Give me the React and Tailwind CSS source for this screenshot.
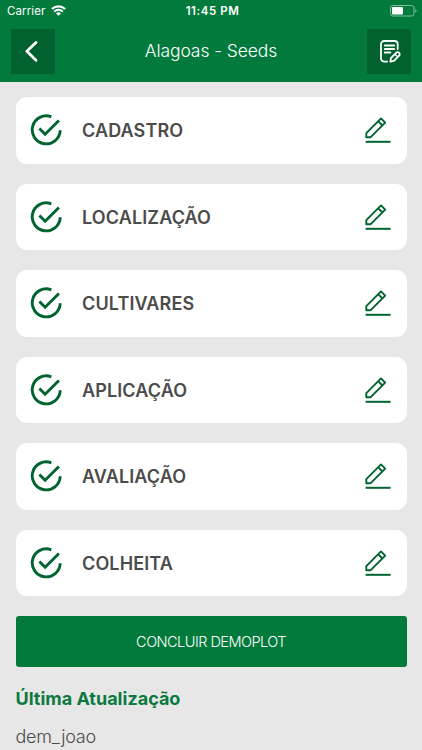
const steps = [
  "CADASTRO",
  "LOCALIZAÇÃO",
  "CULTIVARES",
  "APLICAÇÃO",
  "AVALIAÇÃO",
  "COLHEITA",
];

function StatusBar() {
  return (
    <div className="flex h-[22px] items-center pl-[7px] pr-[4px] text-white">
      <div className="flex flex-1 items-center gap-[6px]">
        <span className="pt-px text-[11.5px] leading-none tracking-[0.1px]">Carrier</span>
        <svg className="mb-px" width="15" height="11" viewBox="0 0 15 11" fill="none" stroke="currentColor">
          <path d="M0.9 4.1a9.4 9.4 0 0 1 13.2 0" strokeWidth="2.1" />
          <path d="M3.2 6.6a6 6 0 0 1 8.6 0" strokeWidth="2" />
          <path d="M5.1 8.4a3.4 3.4 0 0 1 4.8 0L7.5 10.8z" fill="currentColor" stroke="none" />
        </svg>
      </div>
      <span className="pt-px text-[11.5px] font-semibold leading-none tracking-[0.55px]">11:45 PM</span>
      <div className="flex flex-1 justify-end">
        <svg width="28" height="12" viewBox="0 0 28 12" fill="none">
          <rect x="0.5" y="0.5" width="23.5" height="10.5" rx="2.5" stroke="#7fbd9a" />
          <rect x="2" y="2" width="11" height="7.5" rx="1" fill="#fff" />
          <path d="M25.3 4v3.8c1.6-.6 1.6-3.2 0-3.8z" fill="#7fbd9a" />
        </svg>
      </div>
    </div>
  );
}

function Header() {
  return (
    <header className="h-[81.5px] bg-[#027a3c]">
      <StatusBar />
      <div className="flex items-center justify-between px-[10.5px] pt-[7px] text-white">
        <button className="flex h-[44.5px] w-[44.5px] items-center justify-center bg-[#02622f]">
          <svg width="44" height="44" viewBox="0 0 44 44" fill="none" stroke="currentColor" strokeWidth="2.8" strokeLinecap="round" strokeLinejoin="round">
            <path d="M25 13.5 15.8 22.3 25 31.2" />
          </svg>
        </button>
        <h1 className="text-[17.5px] font-light tracking-[-0.1px]">Alagoas - Seeds</h1>
        <button className="flex h-[44.5px] w-[44.5px] items-center justify-center bg-[#02622f]">
          <svg width="44" height="44" viewBox="0 0 44 44" fill="none" stroke="currentColor" strokeWidth="1.8" strokeLinecap="round" strokeLinejoin="round">
            <path d="M30.7 20V15.2a3.2 3.2 0 0 0-3.2-3.2H17.2a3.2 3.2 0 0 0-3.2 3.2v14.2a3.2 3.2 0 0 0 3.2 3.2h2.9" />
            <path d="M17.8 16.5h9.4M17.8 20h9.4M17.8 23.5h5.6" />
            <path d="M23.3 32.6l.7-3.6 5.2-5.2a2 2 0 0 1 2.9 2.9l-5.2 5.2z" />
            <path d="M28.2 25.5l2 2" strokeWidth="1.2" />
          </svg>
        </button>
      </div>
    </header>
  );
}

function StepCard({ label }) {
  return (
    <div className="flex h-[66.5px] items-center rounded-[11px] bg-white pl-[14.5px] pr-[14.5px]">
      <svg className="shrink-0" width="34" height="34" viewBox="0 0 34 34" fill="none" stroke="#006330" strokeWidth="2.9">
        <path d="M21.3 3.8A14 14 0 1 0 30.2 17.2" />
        <path d="M9.4 15.5 15.1 21.3 28.9 7.5" />
      </svg>
      <span className="ml-[18px] flex-1 pt-px text-[18px] font-semibold tracking-[0.12px] text-[#4b4b4b]">{label}</span>
      <svg className="shrink-0" width="28" height="28" viewBox="0 0 28 28" fill="none" stroke="#006330" strokeWidth="1.9" strokeLinejoin="round">
        <path d="M2.3 21.2v-4L17 2.4l4.2 4.3L6.7 21.2z" />
        <path d="M14.1 5.2l4.3 4.3" />
        <path d="M1.6 25.8h25" strokeWidth="2" />
      </svg>
    </div>
  );
}

export default function App() {
  return (
    <div className="h-[750px] w-[422px] overflow-hidden bg-[#e7e7e7] font-['Inter',sans-serif]">
      <Header />
      <main className="px-[15.5px] pt-[15.5px]">
        <div className="flex flex-col gap-5">
          {steps.map((label) => (
            <StepCard key={label} label={label} />
          ))}
        </div>
        <button className="mt-5 flex h-[51px] w-full items-center justify-center rounded-[3px] bg-[#027a3c] text-[14.5px] font-light tracking-[-0.53px] text-white">
          CONCLUIR DEMOPLOT
        </button>
        <h2 className="mt-[18px] text-[18px] font-bold leading-7 text-[#0c7a40]">Última Atualização</h2>
        <p className="mt-[10px] text-[18px] font-light leading-7 tracking-[-0.25px] text-[#4b4b4b]">dem_joao</p>
      </main>
    </div>
  );
}
